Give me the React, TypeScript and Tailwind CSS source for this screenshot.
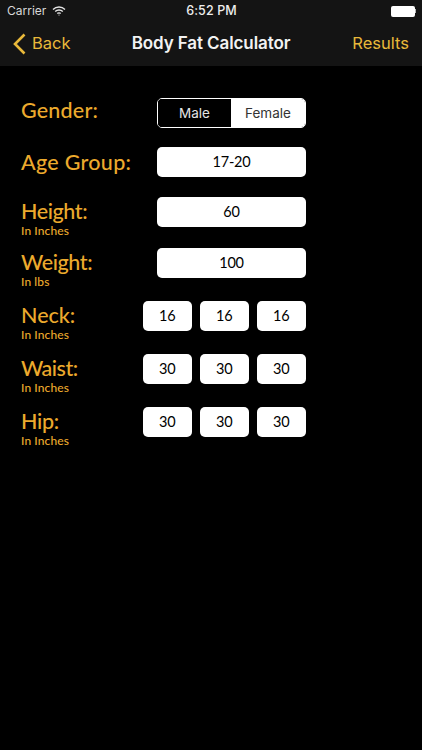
const SANS = "font-['Inter','Liberation_Sans',sans-serif]";
const LABEL = "font-['Lato','Noto_Sans',sans-serif] text-[#ecaa2d]";

function Label({ title, sub, size = "w-[136px]", shift = "", track = "tracking-[0.2px]" }: { title: string; sub?: string; size?: string; shift?: string; track?: string }) {
  return (
    <div className={`${size} shrink-0 ${LABEL} ${shift}`}>
      <div className={`text-[21.5px] leading-[28px] font-medium ${track}`}>{title}</div>
      {sub && <div className="text-[12px] leading-[13px] -mt-[1px] font-medium tracking-[0.1px]">{sub}</div>}
    </div>
  );
}

function Field({ value, w = "w-[149px]" }: { value: string; w?: string }) {
  return (
    <div className={`${w} h-[30px] bg-white rounded-[5px] flex items-center justify-center text-black text-[14.5px] tracking-[-0.2px] font-['Lato','Noto_Sans',sans-serif]`}>
      {value}
    </div>
  );
}

function Triple({ title, value, sub, mt, track }: { title: string; value: string; sub: string; mt: string; track: string }) {
  return (
    <div className={`flex h-[30px] ${mt}`}>
      <Label title={title} sub={sub} size="w-[122px]" track={track} />
      <div className="flex gap-[8.5px]">
        <Field value={value} w="w-[48.5px]" />
        <Field value={value} w="w-[48.5px]" />
        <Field value={value} w="w-[48.5px]" />
      </div>
    </div>
  );
}

export default function App() {
  return (
    <div className="w-[422px] h-[750px] bg-black overflow-hidden">
      <div className={`h-[66px] bg-[#141414] text-white ${SANS}`}>
        <div className="h-[22px] relative flex items-center justify-between pl-[7px] pr-[6px] text-[12px]">
          <div className="flex items-center gap-[6px] text-[#d8d8d8]">
            <span>Carrier</span>
            <svg width="14" height="10" viewBox="0 0 14 10" fill="none" stroke="#e5e5e5" strokeWidth="1.4">
              <path d="M1 3.4a8.6 8.6 0 0 1 12 0" />
              <path d="M3.2 5.6a5.4 5.4 0 0 1 7.6 0" />
              <path d="M5.3 7.6a2.4 2.4 0 0 1 3.4 0" />
              <circle cx="7" cy="9" r=".6" fill="#e5e5e5" stroke="none" />
            </svg>
          </div>
          <span className="absolute left-0 right-0 pl-[1px] text-center text-[12.5px] font-medium text-[#eeeeee] tracking-[0.1px]">6:52 PM</span>
          <div className="flex items-center">
            <div className="w-[24px] h-[11px] bg-white rounded-[2px]" />
            <div className="w-[1.5px] h-[4px] bg-[#bbbbbb]" />
          </div>
        </div>
        <div className="h-[43px] relative flex items-center justify-between pl-[13px] pr-[13px]">
          <div className="flex items-center gap-[6px] text-[#e9b93a] text-[16.5px]">
            <svg width="13" height="22" viewBox="0 0 13 22" fill="none" stroke="#e9b93a" strokeWidth="2.6">
              <path d="M11.5 1.5 2 11l9.5 9.5" />
            </svg>
            <span>Back</span>
          </div>
          <span className="absolute left-0 right-0 text-center text-[17px] font-semibold text-[#f2f2f2] tracking-[-0.1px] pointer-events-none">Body Fat Calculator</span>
          <span className="text-[#e9b93a] text-[16.5px]">Results</span>
        </div>
      </div>

      <div className="pl-[21px]">
        <div className="flex h-[30px] mt-[32px]">
          <Label title="Gender:" shift="-mt-[2px]" />
          <div className={`w-[149px] h-[30px] flex rounded-[5px] border border-white overflow-hidden text-[13.5px] ${SANS}`}>
            <div className="w-[73px] bg-black text-[#e4e4e4] flex items-center justify-center">Male</div>
            <div className="flex-1 bg-white text-[#333333] flex items-center justify-center">Female</div>
          </div>
        </div>
        <div className="flex h-[30px] mt-[19px]">
          <Label title="Age Group:" shift="mt-[1px]" track="tracking-[0.3px]" />
          <Field value="17-20" />
        </div>
        <div className="flex h-[30px] mt-[20px]">
          <Label title="Height:" sub="In Inches" track="tracking-[-0.4px]" />
          <Field value="60" />
        </div>
        <div className="flex h-[30px] mt-[21px]">
          <Label title="Weight:" sub="In lbs" track="tracking-[-0.4px]" />
          <Field value="100" />
        </div>
        <Triple title="Neck:" sub="In Inches" value="16" mt="mt-[23px]" track="tracking-[0px]" />
        <Triple title="Waist:" sub="In Inches" value="30" mt="mt-[23px]" track="tracking-[-0.5px]" />
        <Triple title="Hip:" sub="In Inches" value="30" mt="mt-[23px]" track="tracking-[-0.3px]" />
      </div>
    </div>
  );
}
